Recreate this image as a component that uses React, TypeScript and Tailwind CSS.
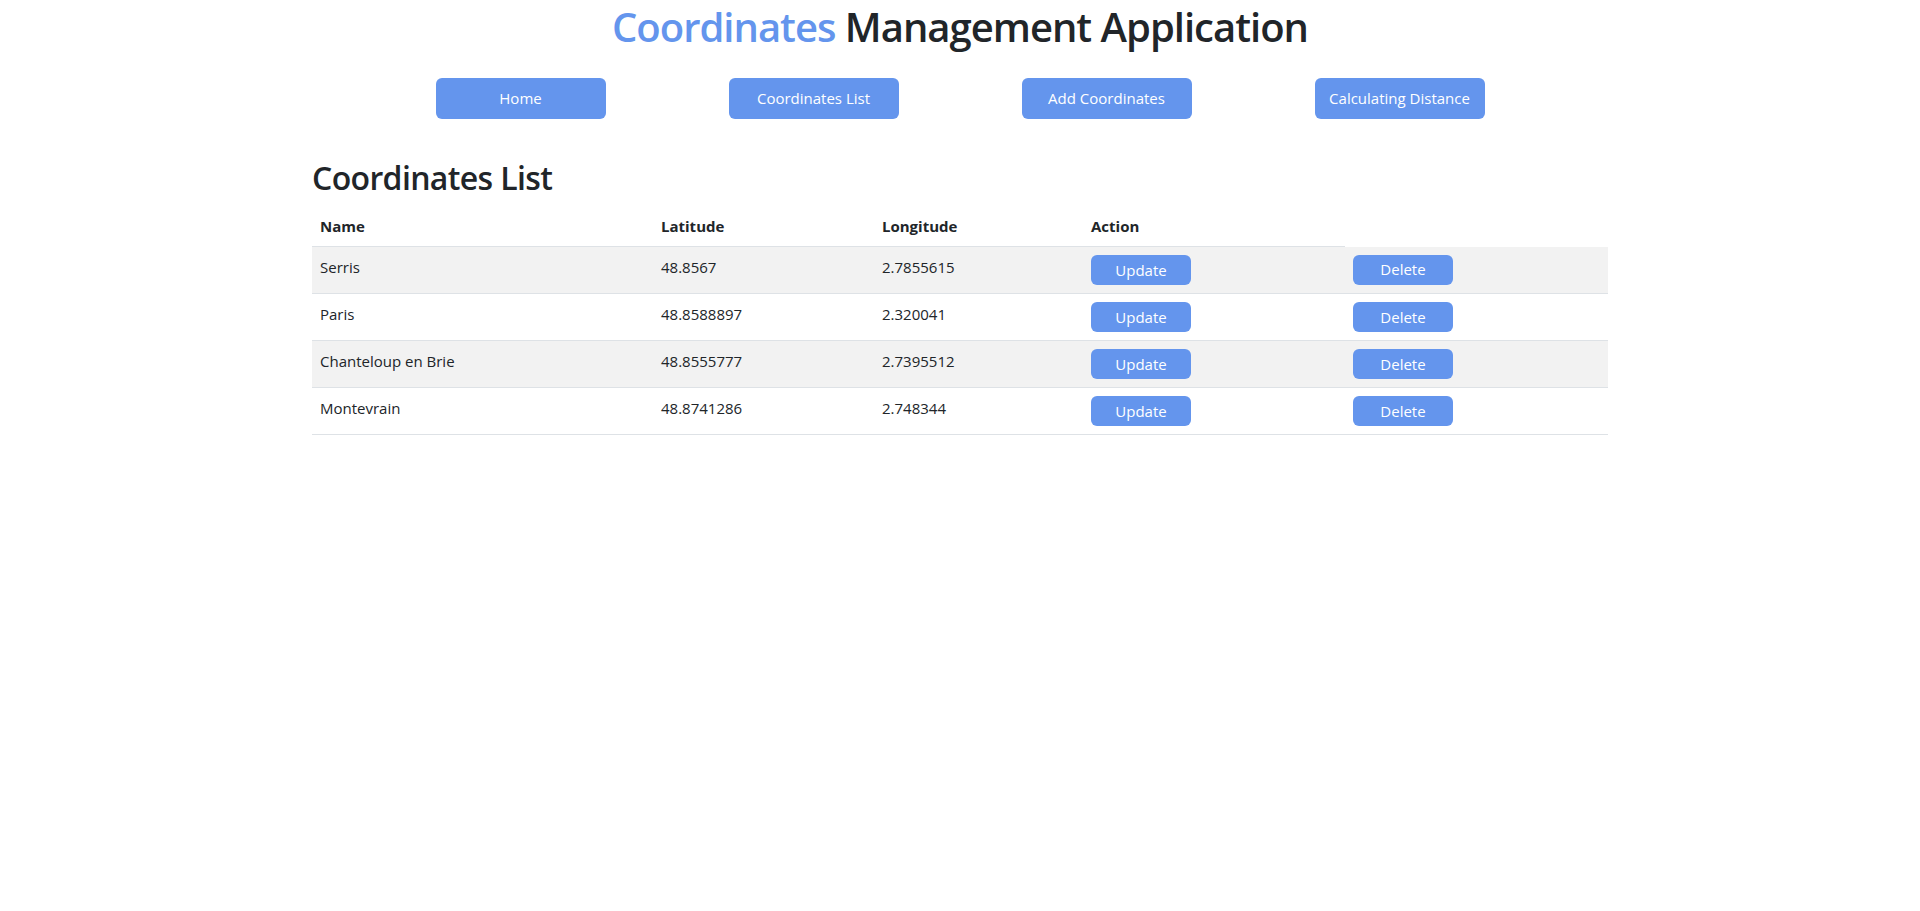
const navItems = ["Home", "Coordinates List", "Add Coordinates", "Calculating Distance"];

const coordinates = [
  { id: 1, name: "Serris", latitude: "48.8567", longitude: "2.7855615" },
  { id: 2, name: "Paris", latitude: "48.8588897", longitude: "2.320041" },
  { id: 3, name: "Chanteloup en Brie", latitude: "48.8555777", longitude: "2.7395512" },
  { id: 4, name: "Montevrain", latitude: "48.8741286", longitude: "2.748344" },
];

const App = () => {
  return (
    <div className="min-h-screen bg-white text-[#212529] font-['Open_Sans',sans-serif] text-base">
      <h1 className="pt-[1px] text-center text-[40px] leading-[52px] font-semibold tracking-[-0.025em]">
        <span className="text-[#6495ED]">Coordinates</span> Management Application
      </h1>

      <nav className="mx-auto mt-[25px] flex w-[1172px] justify-around">
        {navItems.map((item) => (
          <button
            key={item}
            className="h-[41px] w-[170px] rounded-md bg-[#6495ED] text-[15px] text-white"
          >
            {item}
          </button>
        ))}
      </nav>

      <div className="mx-auto mt-[39px] w-[1296px]">
        <h2 className="mb-2 text-[32px] leading-[40px] font-semibold tracking-[-0.02em]">
          Coordinates List
        </h2>
        <table className="w-full border-collapse align-top text-[15px]">
          <thead>
            <tr>
              <th className="w-[341px] border-b border-[#dee2e6] p-2 text-left font-bold leading-6">Name</th>
              <th className="w-[221px] border-b border-[#dee2e6] p-2 text-left font-bold leading-6">Latitude</th>
              <th className="w-[209px] border-b border-[#dee2e6] p-2 text-left font-bold leading-6">Longitude</th>
              <th className="w-[262px] border-b border-[#dee2e6] p-2 text-left font-bold leading-6">Action</th>
            </tr>
          </thead>
          <tbody>
            {coordinates.map((c, idx) => (
              <tr key={c.id} className={idx % 2 === 0 ? "bg-[#f2f2f2]" : "bg-white"}>
                <td className="border-b border-[#dee2e6] p-2 align-top leading-6">{c.name}</td>
                <td className="border-b border-[#dee2e6] p-2 align-top leading-6">{c.latitude}</td>
                <td className="border-b border-[#dee2e6] p-2 align-top leading-6">{c.longitude}</td>
                <td className="border-b border-[#dee2e6] p-2 align-top">
                  <button className="h-[30px] w-[100px] rounded-md bg-[#6495ED] text-[15px] text-white">
                    Update
                  </button>
                </td>
                <td className="border-b border-[#dee2e6] p-2 align-top">
                  <button className="h-[30px] w-[100px] rounded-md bg-[#6495ED] text-[15px] text-white">
                    Delete
                  </button>
                </td>
              </tr>
            ))}
          </tbody>
        </table>
      </div>
    </div>
  );
};

export default App;
